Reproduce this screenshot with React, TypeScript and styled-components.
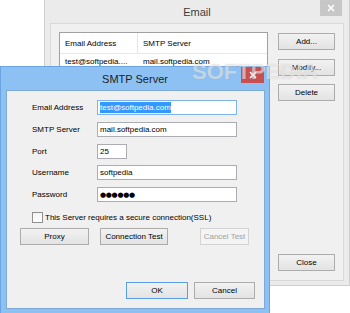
import { FC } from 'react'
import { styled, createGlobalStyle } from 'styled-components'

const GlobalStyle = createGlobalStyle`
  html, body {
    margin: 0;
    padding: 0;
    background: #ffffff;
    overflow: hidden;
  }
  body {
    font-family: "Liberation Sans", Arial, sans-serif;
    font-size: 8px;
    color: #000;
  }
`

const Desktop = styled.div`
  position: relative;
  width: 350px;
  height: 313px;
  overflow: hidden;
  background: #ffffff;
`

// windows sit on a free desktop, so they are placed by coordinates
const Window = styled.section`
  position: absolute;
  box-sizing: border-box;
  display: flex;
  flex-direction: column;
`

const EmailWindow = styled(Window)`
  left: 44px;
  top: -1px;
  width: 306px;
  height: 287px;
  background: #ebebeb;
  border: 1px solid #cfcfcf;
`

const SmtpWindow = styled(Window)`
  left: 0;
  top: 66px;
  width: 270px;
  height: 250px;
  background: #8dc1f3;
  border: 1px solid #6aa5e2;
`

const TitleBar = styled.div<{ $h: number }>`
  display: grid;
  grid-template-columns: 1fr auto 1fr;
  height: ${(p) => p.$h}px;
  flex: 0 0 auto;
`

const Title = styled.div<{ $color: string; $pt: number }>`
  grid-column: 2;
  padding-top: ${(p) => p.$pt}px;
  font-size: 11px;
  line-height: 13px;
  color: ${(p) => p.$color};
`

const CloseBox = styled.div<{ $bg: string; $w: number; $mr: number }>`
  grid-column: 3;
  justify-self: end;
  align-self: start;
  width: ${(p) => p.$w}px;
  height: 16px;
  margin-right: ${(p) => p.$mr}px;
  background: ${(p) => p.$bg};
  display: flex;
  align-items: center;
  justify-content: center;
`

const EmailPanel = styled.div`
  flex: 1;
  margin: 0 5px 4px 5px;
  box-sizing: border-box;
  background: #f0f0f0;
  border: 1px solid #d9d9d9;
  padding: 8px 8px 9px 8px;
  display: flex;
  gap: 10px;
`

const ListBox = styled.div`
  flex: 0 0 209px;
  box-sizing: border-box;
  background: #ffffff;
  border: 1px solid #a0a0a0;
  display: flex;
  flex-direction: column;
`

const ListRow = styled.div<{ $header?: boolean }>`
  display: grid;
  grid-template-columns: 78px 1fr;
  height: ${(p) => (p.$header ? 20 : 14)}px;
  border-bottom: ${(p) => (p.$header ? '1px solid #e8e8e8' : 'none')};
  align-items: center;
`

const ListCell = styled.div<{ $sep?: boolean }>`
  height: 100%;
  display: flex;
  align-items: center;
  padding-left: 5px;
  border-right: ${(p) => (p.$sep ? '1px solid #e5e5e5' : 'none')};
  white-space: nowrap;
  overflow: hidden;
`

const ButtonColumn = styled.div`
  flex: 0 0 57px;
  display: flex;
  flex-direction: column;
  gap: 8.5px;
  padding-top: 1px;
`

const Spacer = styled.div`
  flex: 1;
`

const Button = styled.button<{ $w?: number; $default?: boolean }>`
  box-sizing: border-box;
  width: ${(p) => (p.$w ? `${p.$w}px` : '100%')};
  height: 17px;
  padding: 0;
  font-family: "Liberation Sans", Arial, sans-serif;
  font-size: 8px;
  color: #000;
  background: linear-gradient(#f2f2f2, #e3e3e3);
  border: 1px solid ${(p) => (p.$default ? '#5b9de3' : '#acacac')};
  border-radius: 0;
  white-space: nowrap;
  &:disabled {
    color: #a0a0a0;
    background: #f4f4f4;
    border-color: #d3d3d3;
  }
`

const SmtpClient = styled.div`
  flex: 1;
  margin: 0 4px 6px 5px;
  box-sizing: border-box;
  background: #f0f0f0;
  border: 1px solid #7faad6;
  padding: 9px 0 9px 13px;
  display: flex;
  flex-direction: column;
`

const FormGrid = styled.div`
  display: grid;
  grid-template-columns: 65px 140px;
  grid-auto-rows: 15px;
  row-gap: 6.75px;
  margin-left: 12px;
  align-items: center;
`

const Label = styled.label`
  white-space: nowrap;
`

const Field = styled.div<{ $w?: number; $focus?: boolean }>`
  box-sizing: border-box;
  width: ${(p) => (p.$w ? `${p.$w}px` : '100%')};
  height: 15px;
  background: #ffffff;
  border: 1px solid ${(p) => (p.$focus ? '#7eb4ea' : '#abadb3')};
  padding-left: 2px;
  display: flex;
  align-items: center;
  white-space: nowrap;
  overflow: hidden;
`

const Selected = styled.span`
  background: #3399ff;
  color: #ffffff;
  line-height: 11px;
`

const Dots = styled.span`
  font-family: "DejaVu Sans", sans-serif;
  font-size: 7px;
  letter-spacing: -0.3px;
`

const CheckRow = styled.div`
  display: flex;
  align-items: center;
  gap: 2px;
  margin: 10px 0 0 12px;
  height: 11px;
`

const CheckBox = styled.span`
  box-sizing: border-box;
  width: 11px;
  height: 11px;
  border: 1px solid #8f8f8f;
  background: linear-gradient(#f4f4f4, #ffffff);
`

const ButtonRow = styled.div`
  display: flex;
  gap: 11px;
  margin-top: 5px;
  padding-right: 15px;
`

const FooterRow = styled.div`
  display: flex;
  justify-content: flex-end;
  gap: 6px;
  padding-right: 9px;
`

const Watermark = styled.div`
  position: absolute;
  left: 192px;
  top: 60px;
  font-family: "Liberation Sans", Arial, sans-serif;
  font-weight: bold;
  font-size: 22px;
  line-height: 24px;
  color: rgba(255, 255, 255, 0.5);
  text-shadow: 0 0 1px rgba(120, 120, 120, 0.3);
  pointer-events: none;
`

const CloseIcon: FC = () => (
  <svg width="8" height="8" viewBox="0 0 8 8">
    <path d="M1 1 L7 7 M7 1 L1 7" stroke="#ffffff" strokeWidth="1.6" />
  </svg>
)

const App: FC = () => {
  return (
    <Desktop>
      <GlobalStyle />
      <EmailWindow>
        <TitleBar $h={23}>
          <Title $color="#3c3c3c" $pt={6}>
            Email
          </Title>
          <CloseBox $bg="#c7c7c7" $w={22} $mr={7}>
            <CloseIcon />
          </CloseBox>
        </TitleBar>
        <EmailPanel>
          <ListBox>
            <ListRow $header>
              <ListCell $sep>Email Address</ListCell>
              <ListCell>SMTP Server</ListCell>
            </ListRow>
            <ListRow>
              <ListCell>test@softpedia....</ListCell>
              <ListCell>mail.softpedia.com</ListCell>
            </ListRow>
          </ListBox>
          <ButtonColumn>
            <Button>Add...</Button>
            <Button>Modify...</Button>
            <Button>Delete</Button>
            <Spacer />
            <Button>Close</Button>
          </ButtonColumn>
        </EmailPanel>
      </EmailWindow>

      <SmtpWindow>
        <TitleBar $h={23}>
          <Title $color="#1e1e1e" $pt={6}>
            SMTP Server
          </Title>
          <CloseBox $bg="#c75050" $w={23} $mr={5}>
            <CloseIcon />
          </CloseBox>
        </TitleBar>
        <SmtpClient>
          <FormGrid>
            <Label>Email Address</Label>
            <Field $focus>
              <Selected>test@softpedia.com</Selected>
            </Field>
            <Label>SMTP Server</Label>
            <Field>mail.softpedia.com</Field>
            <Label>Port</Label>
            <Field $w={30}>25</Field>
            <Label>Username</Label>
            <Field>softpedia</Field>
            <Label>Password</Label>
            <Field>
              <Dots>●●●●●●</Dots>
            </Field>
          </FormGrid>
          <CheckRow>
            <CheckBox />
            <span>This Server requires a secure connection(SSL)</span>
          </CheckRow>
          <ButtonRow>
            <Button $w={69}>Proxy</Button>
            <Button $w={68}>Connection Test</Button>
            <Spacer />
            <Button $w={49} disabled>
              Cancel Test
            </Button>
          </ButtonRow>
          <Spacer />
          <FooterRow>
            <Button $w={62} $default>
              OK
            </Button>
            <Button $w={61}>Cancel</Button>
          </FooterRow>
        </SmtpClient>
      </SmtpWindow>
      <Watermark>SOFTPEDIA</Watermark>
    </Desktop>
  )
}

export default App
